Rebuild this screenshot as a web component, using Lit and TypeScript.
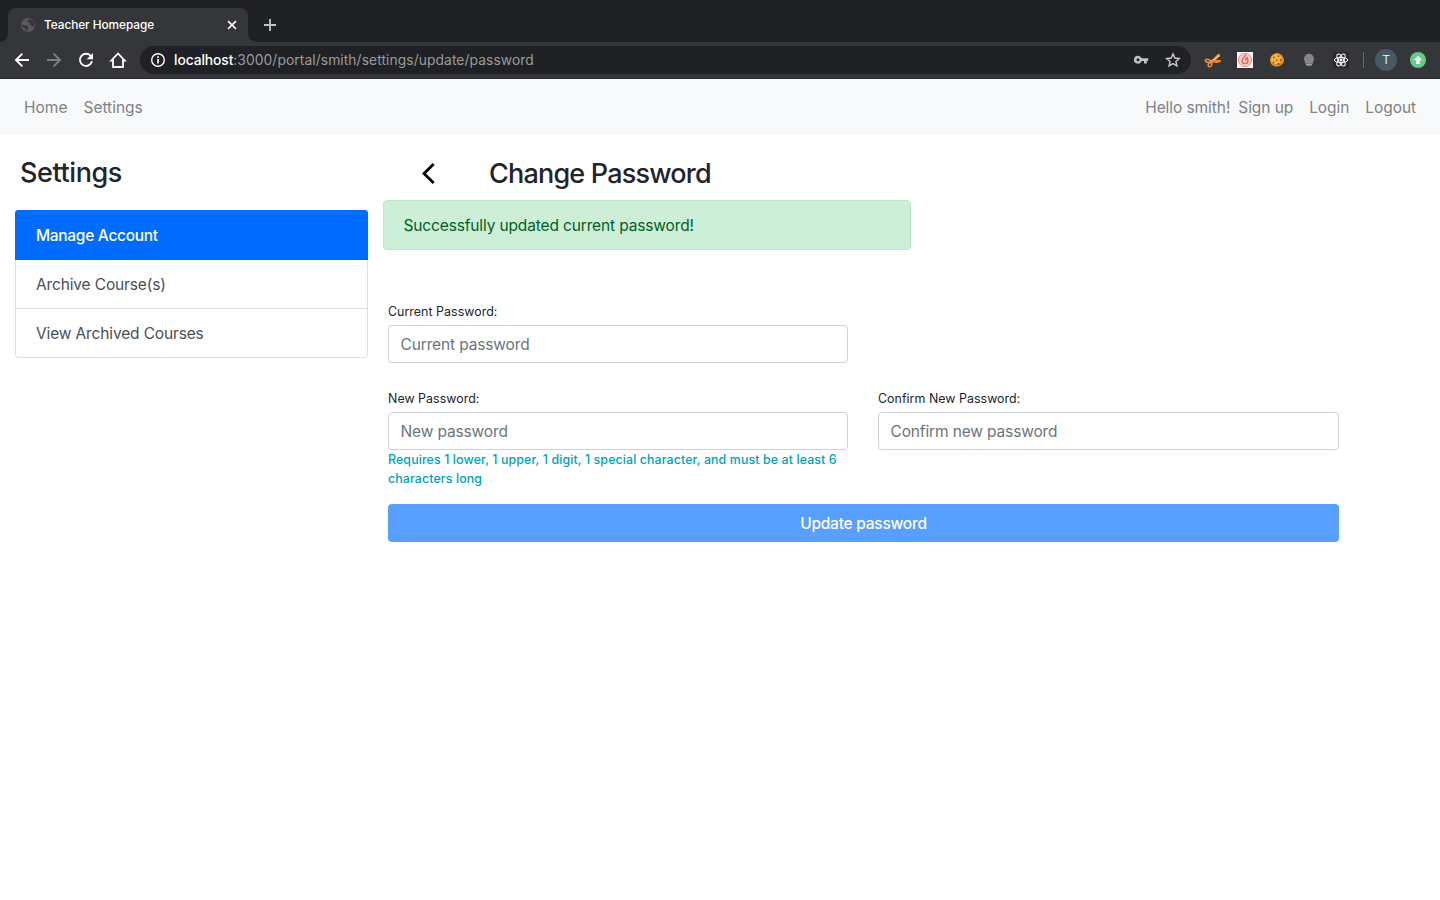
import { LitElement, html, css } from "lit";
import { customElement } from "lit/decorators.js";

@customElement("browser-chrome")
class BrowserChrome extends LitElement {
  static styles = css`
    :host { display: block; font-family: Inter, "Liberation Sans", sans-serif; }
    * { box-sizing: border-box; }
    svg { display: block; flex: none; }
    .strip { height: 42px; background: #202124; display: flex; align-items: flex-end; }
    .foot { width: 8px; height: 8px; background: radial-gradient(circle at 0 0, #202124 7.5px, #35363a 8px); flex: none; }
    .foot.right { background: radial-gradient(circle at 100% 0, #202124 7.5px, #35363a 8px); }
    .tab { width: 240px; height: 34px; background: #35363a; border-radius: 8px 8px 0 0; display: flex; align-items: center; padding: 0 10px 0 12px; }
    .tab-title { flex: 1; margin-left: 8px; color: #fff; font-size: 11.8px; line-height: 16px; font-weight: 500; white-space: nowrap; letter-spacing: -0.04px; }
    .plus { margin: 0 0 10px 7px; }
    .bar { height: 37px; background: #35363a; border-bottom: 1px solid #28292c; display: flex; align-items: center; padding-left: 12px; }
    .nav { display: flex; gap: 12px; width: 128px; }
    .omni { width: 1051px; height: 28px; border-radius: 14px; background: #202124; display: flex; align-items: center; padding: 0 8px; }
    .url { flex: 1; margin-left: 6px; font-size: 13.8px; line-height: 20px; color: #9a9b9d; white-space: nowrap; letter-spacing: 0.09px; }
    .host { color: #fff; font-weight: 500; letter-spacing: -0.08px; }
    .omni-icons { display: flex; gap: 12px; }
    .ext { display: flex; align-items: center; margin-left: 12px; gap: 12px; }
    .sep { width: 1px; height: 16px; background: #6a6b6e; }
    .avatar { width: 22px; height: 22px; border-radius: 50%; background: #455a64; color: #e4e8ea; font-size: 12px; line-height: 22px; text-align: center; margin-left: -1px; }
    .update { margin-left: -1px; }
  `;

  render() {
    return html`
      <div class="strip">
        <div class="foot"></div>
        <div class="tab">
          <svg width="16" height="16" viewBox="0 0 16 16"><circle cx="8" cy="8" r="7" fill="#58595d"/><path d="M2 7.600 4 8.600h2.500L8.200 10v1.500l-1 1.200v1.600L5.800 13.900v-2L3.600 10.200 1.700 9.600zM9 2.300 7.600 3.500v1.300l1.700.600.300 1.800 1.700 1 .500 1.200h2.300l.4-2-.9-2.700-2-2z" fill="#35363a"/></svg>
          <div class="tab-title">Teacher Homepage</div>
          <svg width="12" height="12" viewBox="0 0 12 12"><path d="M2.100 2.100 9.900 9.900M9.900 2.100 2.100 9.900" stroke="#fff" stroke-width="1.500"/></svg>
        </div>
        <div class="foot right"></div>
        <svg class="plus" width="14" height="14" viewBox="0 0 14 14"><path d="M7 1v12M1 7h12" stroke="#c3c5c8" stroke-width="1.800"/></svg>
      </div>
      <div class="bar">
        <div class="nav">
          <svg width="20" height="20" viewBox="0 0 20 20"><path d="M17 10H4.500M10.300 3.700 4 10l6.300 6.300" fill="none" stroke="#fff" stroke-width="1.900"/></svg>
          <svg width="20" height="20" viewBox="0 0 20 20"><path d="M3 10h12.500M9.700 3.700 16 10l-6.300 6.300" fill="none" stroke="#7e7f82" stroke-width="1.900"/></svg>
          <svg width="20" height="20" viewBox="0 0 20 20"><path d="M15 6.200A6.100 6.100 0 1 0 16 11.300" fill="none" stroke="#fff" stroke-width="1.900"/><path d="M17 3v6.300h-6.300z" fill="#fff"/></svg>
          <svg width="20" height="20" viewBox="0 0 20 20"><path d="M5 17V10.500H3.300L10 3.500l6.700 7H15V17z" fill="none" stroke="#fff" stroke-width="1.800"/></svg>
        </div>
        <div class="omni">
          <svg width="20" height="20" viewBox="0 0 20 20"><circle cx="10" cy="10" r="6.300" fill="none" stroke="#fff" stroke-width="1.400"/><path d="M10 9v4.600M10 6.200v1.700" stroke="#fff" stroke-width="1.600"/></svg>
          <div class="url"><span class="host">localhost</span>:3000/portal/smith/settings/update/password</div>
          <div class="omni-icons">
            <svg width="20" height="20" viewBox="0 0 20 20"><path fill-rule="evenodd" d="M7 5.700a4 4 0 1 0 3.700 5.300H13v2.600h2.800V11h1.400V8.200h-6.500A4 4 0 0 0 7 5.700zm0 2.500a1.500 1.500 0 1 1 0 3 1.500 1.500 0 0 1 0-3z" fill="#bfc1c4"/></svg>
            <svg width="20" height="20" viewBox="0 0 20 20"><path d="m10 3.900 1.850 4.150 4.450.45-3.350 3 .95 4.400L10 13.600l-3.900 2.300.95-4.400-3.350-3 4.450-.45z" fill="none" stroke="#c7c9cc" stroke-width="1.400"/></svg>
          </div>
        </div>
        <div class="ext">
          <svg width="20" height="20" viewBox="0 0 20 20"><path d="M9.500 9.500 14.500 4.300l2.200-.5-.2 2.400-5.300 5.600z" fill="#f7933a"/><path d="M7.500 9.800 17.700 10l.3 1.800-3.500 1.300-7.500-.800z" fill="#f58220"/><path d="M9 10.500 17 5.500" stroke="#f6dcc0" stroke-width=".9"/><path d="m9.500 10-1.800 3" stroke="#f7933a" stroke-width="2"/><ellipse cx="4.800" cy="10.800" rx="2.400" ry="1.500" transform="rotate(15 4.800 10.800)" fill="none" stroke="#f7933a" stroke-width="1.500"/><ellipse cx="7" cy="14.700" rx="1.600" ry="2.200" transform="rotate(35 7 14.700)" fill="none" stroke="#f7933a" stroke-width="1.500"/></svg>
          <svg width="20" height="20" viewBox="0 0 20 20"><path fill="#fff" d="M2 2h16v16H2z"/><circle cx="10" cy="10" r="7.300" fill="#fbcfc9"/><circle cx="10" cy="10" r="6.500" fill="none" stroke="#f28a80"/><path d="M10.500 4.500c.500 2-3.500 3.500-3.500 6a3 3 0 0 0 6 .200c0-1.700-1-2-1-3.200-1 .500-1.500 2-1 3.500" fill="none" stroke="#ec5a52" stroke-width="1.300"/></svg>
          <svg width="20" height="20" viewBox="0 0 20 20"><path d="M9 3.200c3-.800 4 1 5.800 1.900.300 1.300 2 2.500 2.200 4.400.200 3-2 6.500-6.500 7C6 17 3 13.800 3 10.200c0-4 2.600-6.300 6-7z" fill="#e08a1e"/><path d="M8.500 4.200c2-.500 4 .500 5 1.500 1.500 2 1.500 4 .500 6-3 3-7 3-9.500 0C3.500 8.500 5 5 8.500 4.200z" fill="#fbb43a"/><circle cx="7" cy="7.500" r=".9" fill="#9c5a1f"/><circle cx="11.500" cy="6.200" r=".9" fill="#9c5a1f"/><circle cx="9.500" cy="10.300" r=".9" fill="#9c5a1f"/><circle cx="13.700" cy="10" r="1" fill="#875022"/><circle cx="6.300" cy="12.500" r=".9" fill="#9c5c22"/><circle cx="11.500" cy="14" r="1" fill="#875022"/></svg>
          <svg width="20" height="20" viewBox="0 0 20 20"><path d="M10 3.800a5 5 0 0 1 5 5c0 2-1 3-1.500 4h-7C6 11.800 5 10.800 5 8.800a5 5 0 0 1 5-5z" fill="#858588"/><path d="M6.200 12.400h7.600c0 2-1.200 3.400-3.800 3.400s-3.800-1.400-3.800-3.400z" fill="#a9aaac"/><path d="M6.800 13.300c1 .700 5.400.700 6.400 0" stroke="#68696c" fill="none"/></svg>
          <svg width="20" height="20" viewBox="0 0 20 20"><path fill="#292a2e" d="M2 2h16v16H2z"/><g fill="none" stroke="#fff" stroke-width="1"><ellipse cx="10" cy="10" rx="6.700" ry="2.600"/><ellipse cx="10" cy="10" rx="6.700" ry="2.600" transform="rotate(60 10 10)"/><ellipse cx="10" cy="10" rx="6.700" ry="2.600" transform="rotate(120 10 10)"/></g><circle cx="10" cy="10" r="1.400" fill="#fff"/></svg>
          <div class="sep"></div>
          <div class="avatar">T</div>
          <svg class="update" width="20" height="20" viewBox="0 0 20 20"><circle cx="10" cy="10" r="8" fill="#62cc8b"/><path d="m10 5.800 4.300 4.500h-2.500V14H8.200v-3.700H5.700z" fill="#fff"/></svg>
        </div>
      </div>
    `;
  }
}

@customElement("app-root")
class AppRoot extends LitElement {
  static styles = css`
    :host { display: block; height: 900px; overflow: hidden; background: #fff; color: #212529; font: 400 15.5px/24px Inter, "Liberation Sans", sans-serif; letter-spacing: -0.14px; }
    * { box-sizing: border-box; }
    .navbar { height: 56px; background: #f8f9fb; display: flex; align-items: center; justify-content: space-between; padding: 2px 24px 0; color: #808182; letter-spacing: 0; }
    .links { display: flex; gap: 16px; white-space: nowrap; }
    .links.account { letter-spacing: -0.07px; }
    .hello { margin-right: -8px; }
    .page { display: flex; gap: 15px; padding: 0 15px; }
    .side { width: 353px; padding-top: 21px; }
    h3 { margin: 0; font-size: 27px; line-height: 34px; font-weight: 550; letter-spacing: -0.8px; }
    .side h3 { padding-left: 5px; letter-spacing: -0.42px; }
    .list { margin-top: 20px; border-radius: 4px; overflow: hidden; color: #495057; }
    .item { height: 49px; border: 1px solid #dfdfdf; border-top: 0; padding: 13px 20px 0; }
    .item.active { height: 50px; background: #006bff; border: 1px solid #006bff; color: #fff; font-weight: 500; letter-spacing: -0.3px; }
    .item:last-child { border-radius: 0 0 4px 4px; }
    .main { width: 960px; padding-top: 22px; }
    .head { display: flex; align-items: center; height: 34px; }
    .back { margin-left: 35px; width: 71px; }
    .alert { width: 528px; height: 50px; margin-top: 9px; padding: 13px 19.5px 0; background: #cdefd8; border: 1px solid #b9e8c7; border-radius: 4px; color: #00601f; }
    .form { width: 951px; margin: 52px 0 0 5px; display: grid; grid-template-columns: 460px 461px; column-gap: 30px; }
    label { display: block; font-size: 12.4px; line-height: 19px; height: 23px; letter-spacing: 0.04px; }
    .field.second { margin-top: 26px; }
    .field.first { grid-column: 1 / 3; width: 460px; }
    input { display: block; width: 100%; height: 38px; border: 1px solid #cdd3da; border-radius: 4px; padding: 6px 11.5px; font: inherit; letter-spacing: inherit; background: #fff; outline: 0; }
    input::placeholder { color: #6c757d; opacity: 1; }
    .hint { color: #00a2b8; font-size: 12.4px; line-height: 19.2px; letter-spacing: 0.11px; font-weight: 500; }
    button { grid-column: 1 / 3; height: 38px; margin-top: 15.6px; padding: 2px 0 0; border: 0; border-radius: 4px; background: #599fff; color: #fff; font: inherit; font-weight: 500; letter-spacing: -0.25px; }
  `;

  render() {
    return html`
      <browser-chrome></browser-chrome>
      <nav class="navbar">
        <div class="links"><span>Home</span><span>Settings</span></div>
        <div class="links account"><span class="hello">Hello smith!</span><span>Sign up</span><span>Login</span><span>Logout</span></div>
      </nav>
      <div class="page">
        <aside class="side">
          <h3>Settings</h3>
          <div class="list">
            <div class="item active">Manage Account</div>
            <div class="item">Archive Course(s)</div>
            <div class="item">View Archived Courses</div>
          </div>
        </aside>
        <main class="main">
          <div class="head">
            <svg class="back" height="24" viewBox="0 0 71 24"><path d="M15.700 2.100 6 11.500l9.700 9.400" fill="none" stroke="#000" stroke-width="2.800"/></svg>
            <h3>Change Password</h3>
          </div>
          <div class="alert">Successfully updated current password!</div>
          <div class="form">
            <div class="field first"><label>Current Password:</label><input placeholder="Current password"></div>
            <div class="field second"><label>New Password:</label><input placeholder="New password">
              <div class="hint">Requires 1 lower, 1 upper, 1 digit, 1 special character, and must be at least 6 characters long</div>
            </div>
            <div class="field second"><label>Confirm New Password:</label><input placeholder="Confirm new password"></div>
            <button>Update password</button>
          </div>
        </main>
      </div>
    `;
  }
}
